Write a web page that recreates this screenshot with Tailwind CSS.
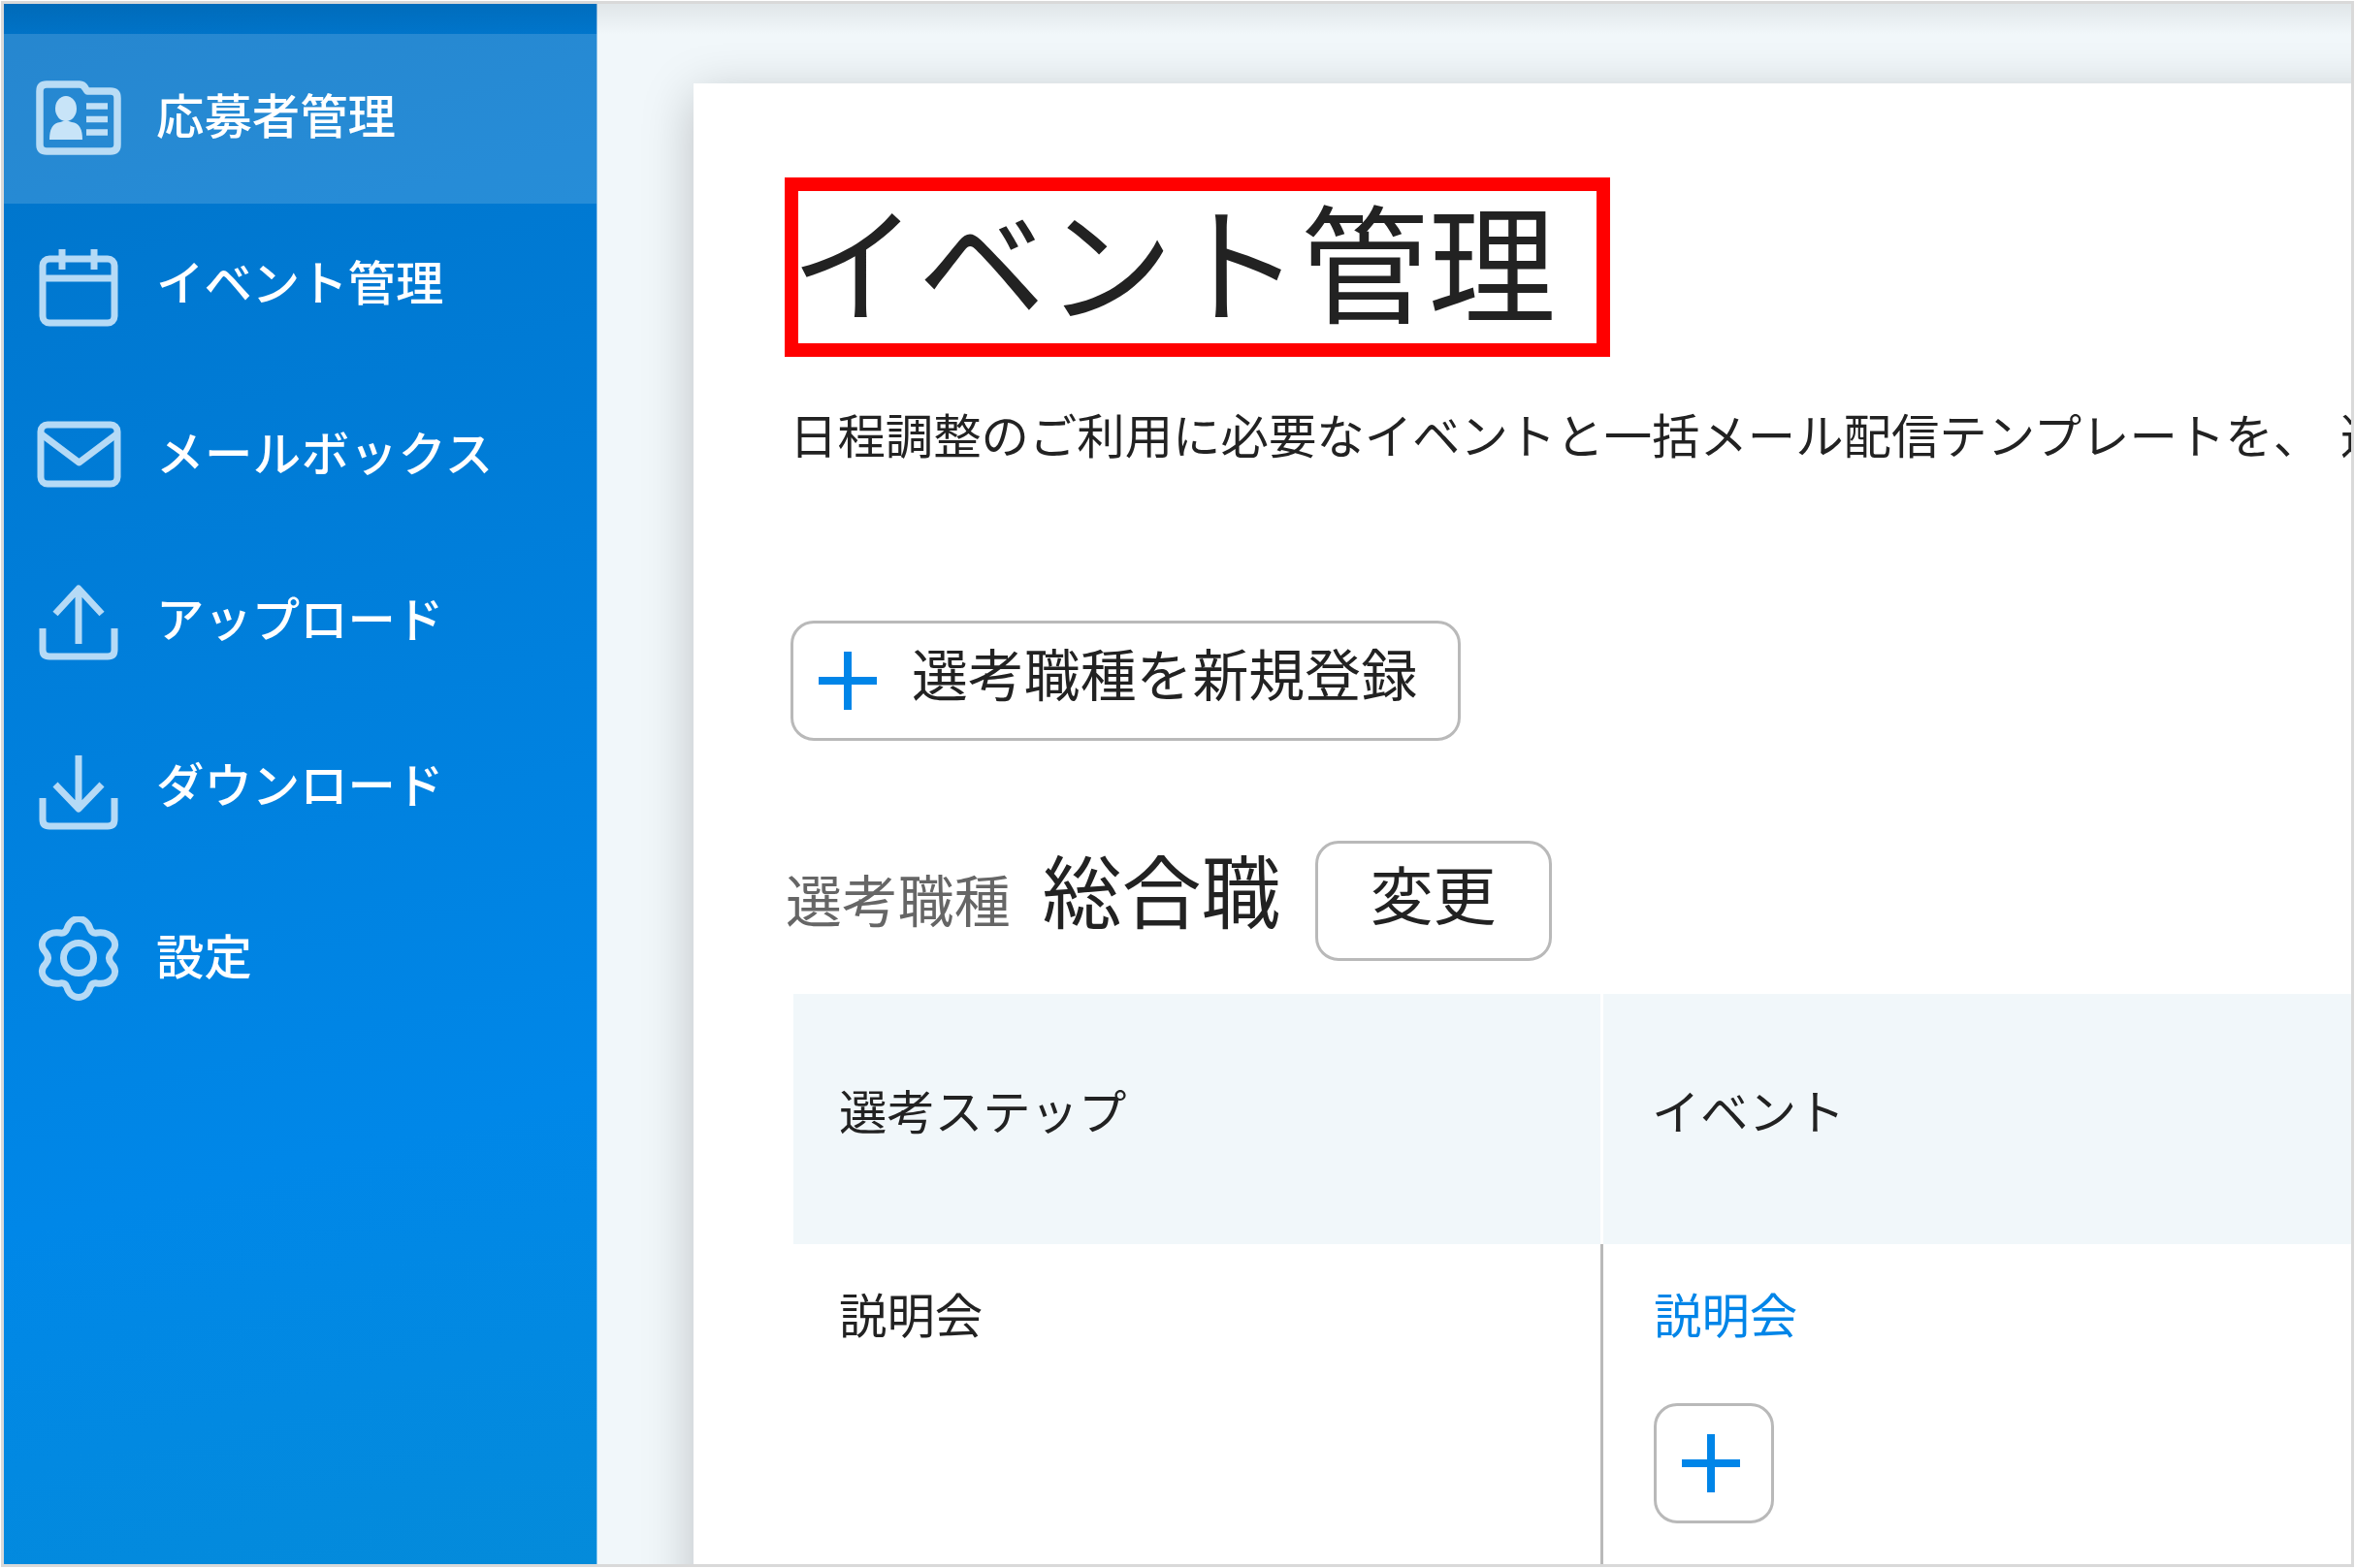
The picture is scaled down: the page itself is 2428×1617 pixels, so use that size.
<!DOCTYPE html>
<html lang="ja">
<head>
<meta charset="utf-8">
<title>イベント管理</title>
<script src="https://cdn.jsdelivr.net/npm/@tailwindcss/browser@4"></script>
</head>
<body class="bg-white p-px w-[2428px] h-[1617px] overflow-hidden font-['Noto_Sans_CJK_JP',sans-serif] text-[#222]">
<div class="relative flex w-[2426px] h-[1615px] border-3 border-[#d9d9d9] bg-[#f1f7fa] overflow-hidden">
  <nav class="w-[612px] shrink-0 pt-[31px] bg-[linear-gradient(166deg,#0072c6_0%,#0079d2_20%,#0087e8_72%,#048bda_100%)] text-white text-[49.4px] leading-none font-medium border-r border-white/60">
    <a class="flex items-center h-[175px] pl-[32px]  bg-white/15">
      <svg class="w-[90px] h-[90px] shrink-0 mr-[35px]" viewBox="0 0 90 90" fill="none" stroke="#b9dcf5" stroke-width="7.500" stroke-linejoin="round"><path d="M12 9h34q4 0 6 4l2 3h24q7 0 7 7v48q0 7-7 7H12q-7 0-7-7V16q0-7 7-7z"/><g fill="#c8e4f8" stroke="none"><ellipse cx="32" cy="34" rx="11" ry="13"/><path d="M15 66q0-17 11-18l6-2 6 2q11 1 11 18z"/></g><path stroke="#c0e0f7" stroke-width="6.500" d="M53 31.500h22M53 45h22M53 58.500h22"/></svg>
      <span class="pb-[12px]">応募者管理</span>
    </a>
    <a class="flex items-center h-[173px] pl-[32px]">
      <svg class="w-[90px] h-[90px] shrink-0 mr-[35px]" viewBox="0 0 90 90" fill="none" stroke="#b5daf6" stroke-width="7" stroke-linejoin="round"><rect x="8" y="15" width="74" height="66" rx="7"/><path d="M8 35h74M28 5v21M61 5v21"/></svg>
      <span class="pb-[16px]">イベント管理</span>
    </a>
    <a class="flex items-center h-[174px] pl-[32px]">
      <svg class="w-[90px] h-[90px] shrink-0 mr-[35px]" viewBox="0 0 90 90" fill="none" stroke="#b5daf6" stroke-width="7" stroke-linejoin="round"><rect x="6" y="13" width="79" height="61" rx="7"/><path d="M7 23l38.500 29L84 23"/></svg>
      <span class="pb-[10px] tracking-[0.5px]">メールボックス</span>
    </a>
    <a class="flex items-center h-[173px] pl-[32px]">
      <svg class="w-[90px] h-[90px] shrink-0 mr-[35px]" viewBox="0 0 90 90" fill="none" stroke="#b5daf6" stroke-width="7" stroke-linejoin="round"><path d="M8 49v22q0 7 7 7h60q7 0 7-7V49M45 65V9M21 34l24-26 24 26"/></svg>
      <span class="pb-[16px]">アップロード</span>
    </a>
    <a class="flex items-center h-[173px] pl-[32px]">
      <svg class="w-[90px] h-[90px] shrink-0 mr-[35px]" viewBox="0 0 90 90" fill="none" stroke="#b5daf6" stroke-width="7" stroke-linejoin="round"><path d="M8 51v22q0 7 7 7h60q7 0 7-7V51M45 7v56M21 37l24 25 24-25"/></svg>
      <span class="pb-[19px]">ダウンロード</span>
    </a>
    <a class="flex items-center h-[174px] pl-[32px]">
      <svg class="w-[90px] h-[90px] shrink-0 mr-[35px]" viewBox="0 0 90 90" fill="none" stroke="#b5daf6" stroke-width="7" stroke-linejoin="round"><circle cx="45" cy="43" r="15.500"/><path d="M33 13c4-14 20-14 24 0q2 5 7 4c15-2 24 11 15 20q-5 6 0 12c9 9 0 22-15 20q-5-1-7 4c-4 14-20 14-24 0q-2-5-7-4c-15 2-24-11-15-20q5-6 0-12c-9-9 0-22 15-20q5 1 7-4z"/></svg>
      <span class="pb-[12px]">設定</span>
    </a>
  </nav>
  <main class="grow min-w-0 pl-[99px] pt-[82px]">
    <section class="w-[1900px] h-[1700px] bg-white shadow-[0_12px_50px_rgba(0,0,0,0.22)] pl-[94px] pt-[97px]">
      <h1 class="w-[851px] h-[185px] border-14 border-[#ff0000] text-[131.500px] leading-[138px] whitespace-nowrap font-normal"><span class="-ml-[8px]">イベント管理</span></h1>
      <p class="mt-[43px] ml-[5px] h-[72px] leading-[72px] text-[49.4px] whitespace-nowrap">日程調整のご利用に必要なイベントと一括メール配信テンプレートを、<span class="ml-[9px]"> 選考職種ごとに</span></p>
      <button class="flex items-center mt-[157px] ml-[6px] w-[691px] h-[124px] border-3 border-[#b9b9b9] rounded-[24px] pl-[26px] text-[57.9px] leading-none whitespace-nowrap">
        <svg class="w-[60px] h-[60px] mr-[36px] shrink-0" viewBox="0 0 60 60" stroke="#0085e8" stroke-width="8"><path d="M30 0v60M0 30h60"/></svg>
        <span class="pb-[17px]">選考職種を新規登録</span>
      </button>
      <div class="flex items-end mt-[103px] h-[124px] whitespace-nowrap leading-none">
        <span class="text-[57.9px] text-[#666] pb-[35px] ml-px">選考職種</span>
        <span class="text-[82px] ml-[33px] pb-[34px]">総合職</span>
        <button class="ml-[35px] w-[244px] h-[124px] shrink-0 border-3 border-[#b9b9b9] rounded-[24px] text-[65px] pb-[18px] leading-none">変更</button>
      </div>
      <div class="grid grid-cols-[832px_1fr] mt-[34px] ml-[9px] text-[49.4px] leading-none">
        <div class="h-[258px] bg-[#f1f7fa] pt-[94px] pl-[47px]">選考ステップ</div>
        <div class="h-[258px] bg-[#f1f7fa] border-l-3 border-white pt-[94px] pl-[50px] tracking-[0.5px]">イベント</div>
        <div class="h-[400px] pt-[46px] pl-[47px]">説明会</div>
        <div class="h-[400px] border-l-3 border-[#b9b9b9] pt-[46px] pl-[52px]">
          <div class="text-[#0085e8]">説明会</div>
          <button class="flex items-center justify-center mt-[69px] w-[124px] h-[124px] border-3 border-[#b9b9b9] rounded-[24px] pr-[7px]"><svg class="w-[60px] h-[60px]" viewBox="0 0 60 60" stroke="#0085e8" stroke-width="8"><path d="M30 0v60M0 30h60"/></svg></button>
        </div>
      </div>
    </section>
  </main>
  <div class="absolute inset-x-0 top-0 h-[32px] bg-linear-to-b from-black/7 to-transparent"></div>
</div>
</body>
</html>
